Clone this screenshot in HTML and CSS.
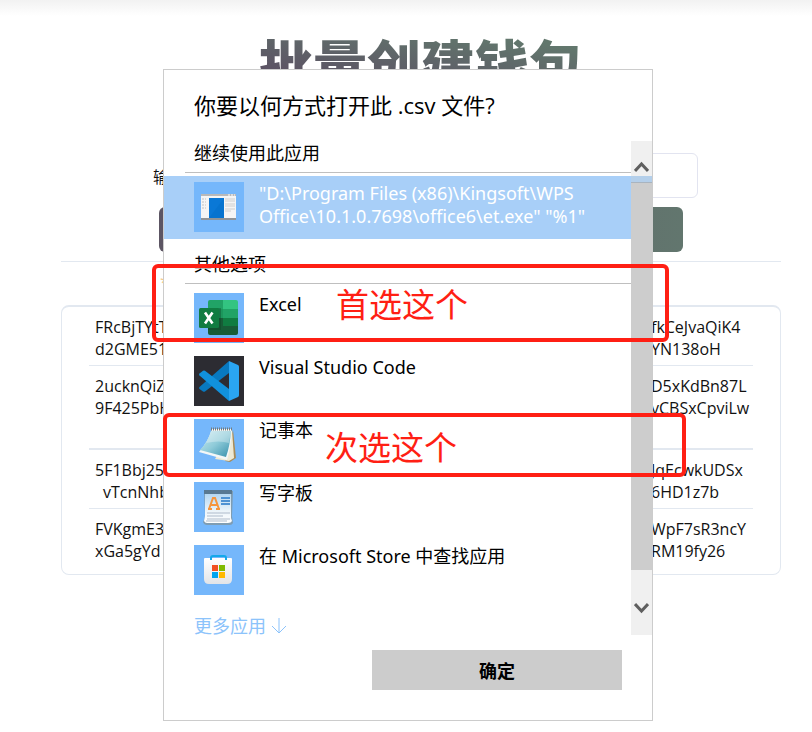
FILE: index.html
```html
<!DOCTYPE html>
<html lang="zh-CN">
<head>
<meta charset="utf-8">
<meta name="viewport" content="width=device-width, initial-scale=1">
<title>批量创建钱包</title>
<link rel="stylesheet" href="styles.css">
</head>
<body>
<main class="page">
  <h1 class="page-title">批量创建钱包</h1>
  <form class="create-form">
    <div class="field">
      <label for="count">输入</label>
      <input id="count" type="text">
    </div>
    <button class="create-button" type="button" aria-label="创建"></button>
  </form>
  <p class="note">*</p>
  <div class="wallets">
    <table>
      <tbody>
        <tr><td>FRcBjTYtT<br>d2GME51</td><td>fkCeJvaQiK4<br>YN138oH</td></tr>
        <tr class="group-end"><td>2ucknQiZ<br>9F425PbH</td><td>D5xKdBn87L<br>vCBSxCpviLw</td></tr>
        <tr><td>5F1Bbj25<br><span class="indent">vTcnNhb</span></td><td>JqEcwkUDSx<br>6HD1z7b</td></tr>
        <tr><td>FVKgmE3<br>xGa5gYd</td><td>WpF7sR3ncY<br>RM19fy26</td></tr>
      </tbody>
    </table>
  </div>
</main>

<section class="dialog" role="dialog" aria-labelledby="dialog-title">
  <h2 class="dialog-title" id="dialog-title">你要以何方式打开此 .csv 文件?</h2>
  <div class="chooser">
    <div class="apps">
      <h3 class="group-title">继续使用此应用</h3>
      <button class="app selected" type="button">
        <svg class="app-icon" viewBox="0 0 50 50" aria-hidden="true">
          <rect width="50" height="50" fill="#75b7fb"/>
          <path d="M7 12h35v25H7z" fill="#f5f5f5"/>
          <path d="M7 12h35v2H7z" fill="#b9b9b9"/>
          <path d="M7 36h35v2H7z" fill="#8f9499"/>
          <path d="M34 13h2M37 13h2M40 13h1" stroke="#fff"/>
          <path d="M8 17h4M8 20h4M8 23h4M8 26h4" stroke="#c3c3c3" stroke-dasharray="2 1"/>
          <path d="M31 17h10M31 19h10M31 22h10M31 24h10M31 27h10M31 29h6" stroke="#cfcfcf"/>
          <path d="M15 16h15v20H15z" fill="#0a78d6"/>
          <path d="M15 36L30 16v20z" fill="#0069c4" opacity=".35"/>
        </svg>
        <span>"D:\Program Files (x86)\Kingsoft\WPS Office\10.1.0.7698\office6\et.exe" "%1"</span>
      </button>
      <h3 class="group-title other">其他选项</h3>
      <div class="options">
        <button class="app" type="button">
          <svg class="app-icon" viewBox="0 0 50 50" aria-hidden="true">
            <rect width="50" height="50" fill="#75b7fb"/>
            <path d="M16 7h13v9H14V9q0-2 2-2z" fill="#21a366"/>
            <path d="M29 7h13q2 0 2 2v7H29z" fill="#33c481"/>
            <path d="M14 16h15v9H14z" fill="#21a366"/>
            <path d="M14 16h15v9H14z" fill="#107c41" opacity=".3"/>
            <path d="M29 16h15v9H29z" fill="#21a366"/>
            <path d="M14 25h15v9H14z" fill="#185c37"/>
            <path d="M29 25h15v9H29z" fill="#107c41"/>
            <path d="M14 33h30v7q0 2-2 2H16q-2 0-2-2z" fill="#185c37"/>
            <path d="M14 15h13v22H14z" fill="#0b3d22" opacity=".35"/>
            <rect x="5" y="15" width="20" height="20" rx="1.500" fill="#107c41"/>
            <path d="M11 19.500l7.500 11M18.500 19.500l-7.500 11" stroke="#fff" stroke-width="2.600"/>
          </svg>
          <span>Excel</span>
        </button>
        <button class="app" type="button">
          <svg class="app-icon" viewBox="0 0 50 50" aria-hidden="true">
            <rect width="50" height="50" fill="#2c2c32"/>
            <path d="M35 5v12L11 35.500q-1 .7-2 0L5.500 33q-1-1 0-2z" fill="#0879c0"/>
            <path d="M35 45V33L11 14.800q-1-.7-2 0L5.500 17.500q-1 1 0 2z" fill="#1191dc"/>
            <path d="M35 5l9 4q1 .6 1 2v28q0 1.400-1 2l-9 4z" fill="#2aa5f2"/>
          </svg>
          <span>Visual Studio Code</span>
        </button>
        <button class="app" type="button">
          <svg class="app-icon" viewBox="0 0 50 50" aria-hidden="true">
            <defs>
              <linearGradient id="pad" x1="0" y1="0" x2="1" y2="1">
                <stop offset="0" stop-color="#cdeaf0"/><stop offset=".5" stop-color="#8fcbd9"/><stop offset="1" stop-color="#358fab"/>
              </linearGradient>
            </defs>
            <rect width="50" height="50" fill="#75b7fb"/>
            <path d="M39 11l3 28-6 4-5-1z" fill="#a98c58"/>
            <path d="M38 11l2 28-5 3-14-2z" fill="#eee9d4"/>
            <path d="M18 10h20q-1 18-5 31L5 33Q14 23 18 10z" fill="#f3f7f7"/>
            <path d="M17 12h20q-1 15-5 26L6 31q8-8 11-19z" fill="url(#pad)"/>
            <path d="M12 24q13-3 23 0 1-6 2-12H17q-2 7-5 12z" fill="#fff" opacity=".3"/>
            <path d="M17 10h22" stroke="#777d7e" stroke-width="3" stroke-dasharray="1 1"/>
          </svg>
          <span>记事本</span>
        </button>
        <button class="app" type="button">
          <svg class="app-icon" viewBox="0 0 50 50" aria-hidden="true">
            <defs>
              <linearGradient id="doc" x1="0" y1="0" x2="0" y2="1">
                <stop offset="0" stop-color="#b4d7f1"/><stop offset=".6" stop-color="#edf5fa"/><stop offset="1" stop-color="#fff"/>
              </linearGradient>
            </defs>
            <rect width="50" height="50" fill="#75b7fb"/>
            <path d="M10 9h29l-1 25 1 7q-1 2-3 2H13q-3 0-4-3 2-3 2-8z" fill="#7f9db3"/>
            <path d="M11 12h26v24l1 3q-1 2-4 2H13q-2 0-3-2l1-5z" fill="url(#doc)"/>
            <path d="M10 8h28v4H10z" fill="#587992"/>
            <path d="M14 27h4M22 27h4M15 27l4-11h2l4 11M17 23h6" fill="none" stroke="#f5953d" stroke-width="2"/>
            <path d="M27 16h9M27 19h9M27 22h9" stroke="#4f93d3" stroke-width="2"/>
            <path d="M13 31h23M13 34h16M13 37h23M12 39h21" stroke="#aebbcb"/>
          </svg>
          <span>写字板</span>
        </button>
        <button class="app" type="button">
          <svg class="app-icon" viewBox="0 0 50 50" aria-hidden="true">
            <defs>
              <linearGradient id="bag" x1="0" y1="0" x2="0" y2="1">
                <stop offset="0" stop-color="#fff"/><stop offset="1" stop-color="#e2e4e7"/>
              </linearGradient>
            </defs>
            <rect width="50" height="50" fill="#75b7fb"/>
            <path d="M11 13h26q1 0 1 1v20q0 5-5 5H15q-5 0-5-5V14q0-1 1-1z" fill="url(#bag)"/>
            <path d="M17 15v-2q0-2 2-2h11q2 0 2 2v2" fill="none" stroke="#14a8ea" stroke-width="2"/>
            <path d="M18 20h6v6h-6z" fill="#f25022"/>
            <path d="M25 20h6v6h-6z" fill="#7fba00"/>
            <path d="M18 27h6v6h-6z" fill="#00a4ef"/>
            <path d="M25 27h6v6h-6z" fill="#ffb900"/>
          </svg>
          <span>在 Microsoft Store 中查找应用</span>
        </button>
      </div>
      <a class="more" href="#more">更多应用
        <svg viewBox="0 0 16 18" width="16" height="18" aria-hidden="true"><path d="M8 1v15M1 9l7 7 7-7" fill="none" stroke="currentColor"/></svg>
      </a>
    </div>
    <div class="scrollbar" aria-hidden="true">
      <div class="scroll-up"><svg viewBox="0 0 15 12" width="15" height="12"><path d="M1 10l6.500-7 6.500 7" fill="none" stroke="#5f5f5f" stroke-width="3"/></svg></div>
      <div class="scroll-gap"></div>
      <div class="scroll-thumb"></div>
      <div class="scroll-down"><svg viewBox="0 0 15 12" width="15" height="12"><path d="M1 2l6.500 7L14 2" fill="none" stroke="#5f5f5f" stroke-width="3"/></svg></div>
    </div>
  </div>
  <div class="actions"><button class="confirm" type="button">确定</button></div>
</section>

<div class="mark first"><span>首选这个</span></div>
<div class="mark second"><span>次选这个</span></div>
</body>
</html>
```
FILE: styles.css
```css
* {
  box-sizing: border-box;
}

body {
  margin: 0;
  position: relative;
  min-height: 100vh;
  background: linear-gradient(#f2f2f2, #fff 16px) no-repeat #fff;
  color: #111;
  font-family: "Open Sans", "Noto Sans CJK SC", sans-serif;
  font-size: 16px;
}

h1, h2, h3, p {
  margin: 0;
}

button, input {
  font: inherit;
  border: 0;
}

.page {
  padding: 33px 31px 0 61px;
}

.page-title {
  width: fit-content;
  margin: 0 auto;
  font-size: 54px;
  line-height: 64px;
  font-weight: 900;
  color: transparent;
  background: linear-gradient(8deg, #5c5364 25%, #62776d 85%);
  background-clip: text;
}

.create-form {
  display: flex;
  flex-direction: column;
  gap: 9px;
  padding: 56px 83px 9px 92px;
  border-bottom: 1px solid #e2e8f0;
}

.field {
  display: flex;
  align-items: center;
  gap: 16px;
}

.field input {
  flex: 1;
  height: 45px;
  border: 1px solid #e2e4f0;
  border-radius: 6px;
  background: #fff;
}

.create-button {
  height: 45px;
  margin: 0 15px 0 6px;
  border-radius: 6px;
  background: linear-gradient(90deg, #5c5563, #62766e);
}

.note {
  padding: 8px 0 0 99px;
  height: 43px;
  line-height: 24px;
  color: #f6c98a;
}

.wallets {
  padding: 0 27px 7px;
  border: 1px solid #e2e8f0;
  border-top-width: 2px;
  border-radius: 8px;
}

.wallets table {
  width: 100%;
  border-collapse: collapse;
}

.wallets td {
  padding: 9px 6px 5px;
  line-height: 22px;
  vertical-align: top;
  white-space: nowrap;
}

.wallets td:last-child {
  width: 102px;
  padding: 9px 0 5px;
}

.wallets tr + tr {
  border-top: 1px solid #e2e8f0;
}

.wallets .group-end td {
  height: 83px;
  border-bottom: 2px solid #e2e8f0;
}

.indent {
  padding-left: 8px;
}

.dialog {
  position: absolute;
  top: 69px;
  left: 163px;
  width: 490px;
  padding-bottom: 30px;
  border: 1px solid #ccc;
  background: #fff;
  color: #000;
}

.dialog-title {
  padding: 19px 30px 20px;
  font-size: 22px;
  line-height: 32px;
  font-weight: 400;
}

.chooser {
  display: flex;
}

.apps {
  flex: 1;
  font-family: "Noto Sans", "Noto Sans CJK SC", sans-serif;
  font-size: 18px;
  line-height: 23px;
}

.group-title {
  margin-left: 21px;
  padding: 0 9px 7px;
  border-bottom: 1px solid #bfbfbf;
  font-size: 18px;
  line-height: 24px;
  font-weight: 400;
}

.group-title.other {
  margin-top: 13px;
}

.app {
  display: flex;
  gap: 15px;
  width: 100%;
  padding: 0 30px;
  background: none;
  color: inherit;
  text-align: left;
  line-height: 23px;
}

.app.selected {
  margin-top: 3px;
  padding: 6px 30px 7px;
  background: #a8cff8;
  color: #fff;
}

.app-icon {
  flex: none;
  width: 50px;
  height: 50px;
}

.options {
  display: flex;
  flex-direction: column;
  gap: 13px;
  padding-top: 9px;
}

.more {
  display: flex;
  align-items: center;
  gap: 5px;
  padding: 22px 30px 0;
  color: #8cc3fb;
  line-height: 18px;
  text-decoration: none;
}

.scrollbar {
  display: flex;
  flex-direction: column;
  width: 21px;
  background: #f0f0f0;
}

.scroll-up {
  height: 35px;
  padding: 20px 3px 0;
}

.scroll-gap {
  height: 6px;
  background: #b4cfea;
}

.scroll-thumb {
  flex: 1;
  border-top: 1px solid #a9b4bf;
  background: #cdcdcd;
}

.scroll-down {
  height: 65px;
  padding: 32px 3px 0;
}

.scrollbar svg {
  display: block;
}

.actions {
  display: flex;
  justify-content: flex-end;
  padding: 15px 30px 0;
}

.confirm {
  width: 250px;
  height: 40px;
  background: #ccc;
  color: #000;
  font-size: 18px;
  font-weight: 700;
}

.mark {
  position: absolute;
  border: 4px solid #ff1f14;
  border-radius: 6px;
  color: #ff1f14;
  font-size: 33px;
  line-height: 40px;
}

.mark.first {
  top: 264px;
  left: 152px;
  width: 517px;
  height: 78px;
  padding: 17px 180px;
}

.mark.second {
  top: 413px;
  left: 163px;
  width: 523px;
  height: 64px;
  padding: 11px 158px;
}
```
